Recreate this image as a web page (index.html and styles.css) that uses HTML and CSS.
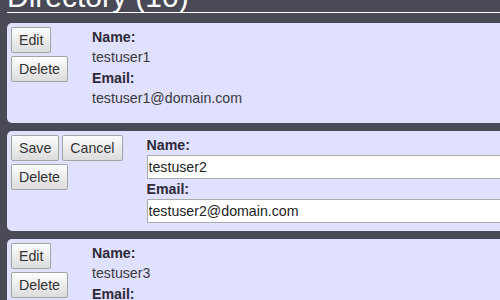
FILE: index.html
```html
<!DOCTYPE html>
<html>
<head>
<meta charset="utf-8">
<link rel="stylesheet" href="styles.css">
</head>
<body>
<div class="page">
  <h1 class="title">Directory (10)</h1>
  <div class="list">
    <div class="card">
      <div class="actions">
        <div class="row"><button class="btn">Edit</button></div>
        <div class="row"><button class="btn">Delete</button></div>
      </div>
      <div class="details view">
        <div class="label">Name:</div>
        <div class="value">testuser1</div>
        <div class="label">Email:</div>
        <div class="value">testuser1@domain.com</div>
      </div>
    </div>
    <div class="card">
      <div class="actions">
        <div class="row"><button class="btn">Save</button><button class="btn">Cancel</button></div>
        <div class="row"><button class="btn">Delete</button></div>
      </div>
      <div class="details edit">
        <div class="label">Name:</div>
        <input class="field" type="text" value="testuser2">
        <div class="label">Email:</div>
        <input class="field" type="text" value="testuser2@domain.com">
      </div>
    </div>
    <div class="card">
      <div class="actions">
        <div class="row"><button class="btn">Edit</button></div>
        <div class="row"><button class="btn">Delete</button></div>
      </div>
      <div class="details view">
        <div class="label">Name:</div>
        <div class="value">testuser3</div>
        <div class="label">Email:</div>
        <div class="value">testuser3@domain.com</div>
      </div>
    </div>
  </div>
</div>
</body>
</html>
```
FILE: styles.css
```css
html {
  overflow: hidden;
  background: #4a4a56;
}
body {
  margin: 0;
  background: #4a4a56;
  font-family: "Liberation Sans", Arial, sans-serif;
  font-size: 14.2px;
  color: #333;
}
.page {
  width: 640px;
  padding: 0 7px;
}
.title {
  margin: -18px 0 0;
  font-size: 30px;
  line-height: 30px;
  font-weight: normal;
  color: #fff;
  border-bottom: 1px solid #fff;
}
.list {
  display: flex;
  flex-direction: column;
  gap: 8px;
  margin-top: 10px;
}
.card {
  display: flex;
  gap: 24px;
  background: #e0e0ff;
  border-radius: 5px;
  padding: 4px 4px 8px;
}
.actions {
  display: flex;
  flex-direction: column;
  gap: 3px;
}
.row {
  display: flex;
  gap: 3px;
}
.btn {
  font-family: "Liberation Sans", Arial, sans-serif;
  font-size: 14.2px;
  line-height: 16px;
  height: 26px;
  padding: 4px 7px;
  color: #333;
  background: linear-gradient(#fdfdfd, #dcdcdc);
  border: 1px solid #a4a4a4;
  border-radius: 2px;
}
.details {
  min-height: 88px;
}
.label {
  font-weight: bold;
  line-height: 20px;
  color: #2e2a38;
}
.value {
  line-height: 21px;
  color: #3a3a3a;
}
.field {
  display: block;
  box-sizing: border-box;
  width: 420px;
  height: 24px;
  margin: 0;
  padding: 1px 1px;
  font-family: "Liberation Sans", Arial, sans-serif;
  font-size: 14.2px;
  color: #222;
  background: #fff;
  border: 1px solid #aaa;
  border-radius: 0;
  outline: none;
}
```
